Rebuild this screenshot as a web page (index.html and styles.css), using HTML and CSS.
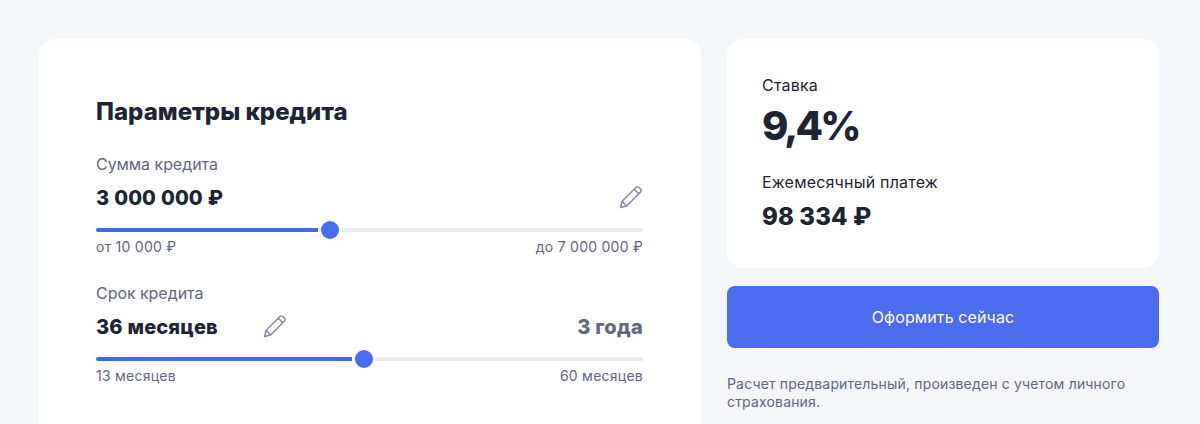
FILE: index.html
```html
<!DOCTYPE html>
<html lang="ru">
<head>
<meta charset="utf-8">
<title>Параметры кредита</title>
<link rel="stylesheet" href="styles.css">
</head>
<body>
<main class="page">
  <section class="card params">
    <h1 class="title">Параметры кредита</h1>
    <div class="field first">
      <div class="label">Сумма кредита</div>
      <div class="value-row">
        <span class="value">3 000 000 ₽</span>
        <svg class="pencil" viewBox="0 0 24 24"><path d="M1.5 22.5l1.6-6.2L16.9 2.5a2.1 2.1 0 0 1 3 0l1.6 1.6a2.1 2.1 0 0 1 0 3L7.7 20.9zM3.1 16.3l4.6 4.6M15.2 4.2l4.6 4.6M1.5 22.5l3.2-.8"/></svg>
      </div>
      <div class="slider"><div class="fill fill-sum"></div><div class="thumb"></div><div class="rest"></div></div>
      <div class="limits"><span>от 10 000 ₽</span><span>до 7 000 000 ₽</span></div>
    </div>
    <div class="field second">
      <div class="label">Срок кредита</div>
      <div class="value-row">
        <span class="value">36 месяцев</span>
        <svg class="pencil pencil-inline" viewBox="0 0 24 24"><path d="M1.5 22.5l1.6-6.2L16.9 2.5a2.1 2.1 0 0 1 3 0l1.6 1.6a2.1 2.1 0 0 1 0 3L7.7 20.9zM3.1 16.3l4.6 4.6M15.2 4.2l4.6 4.6M1.5 22.5l3.2-.8"/></svg>
        <span class="years">3 года</span>
      </div>
      <div class="slider"><div class="fill fill-term"></div><div class="thumb"></div><div class="rest"></div></div>
      <div class="limits"><span>13 месяцев</span><span>60 месяцев</span></div>
    </div>
  </section>
  <aside class="side">
    <section class="card summary">
      <div class="sum-label">Ставка</div>
      <div class="rate">9,4%</div>
      <div class="sum-label monthly">Ежемесячный платеж</div>
      <div class="payment">98 334 ₽</div>
    </section>
    <button class="cta" type="button">Оформить сейчас</button>
    <p class="note">Расчет предварительный, произведен с учетом личного страхования.</p>
  </aside>
</main>
</body>
</html>
```
FILE: styles.css
```css
* { box-sizing: border-box; }
html, body { margin: 0; height: 100%; overflow: hidden; }
body {
  background: #f5f6fa;
  font-family: "Inter", "Noto Sans", sans-serif;
  color: #1e2431;
}
.page {
  display: flex;
  gap: 26px;
  padding: 39px 41px 0 39px;
  align-items: flex-start;
}
.card { background: #fff; border-radius: 16px; }
.params {
  width: 662px;
  height: 385px;
  padding: 58px 58px 0 57px;
  border-radius: 16px 16px 0 0;
}
.title {
  margin: 0;
  font-size: 24px;
  line-height: 30px;
  font-weight: 800;
  letter-spacing: 0;
}
.field.first { margin-top: 25px; }
.field.second { margin-top: 25px; }
.label {
  font-size: 16px;
  line-height: 24px;
  color: #62667e;
  letter-spacing: -0.05px;
}
.value-row {
  display: flex;
  align-items: center;
  height: 32px;
  margin-top: 6px;
}
.value {
  font-size: 20px;
  line-height: 28px;
  font-weight: 800;
  letter-spacing: 0.1px;
  word-spacing: 0.5px;
}
.pencil {
  width: 24px;
  height: 24px;
  margin-top: -2px;
  margin-left: auto;
  fill: none;
  stroke: #84869e;
  stroke-width: 1.4;
  stroke-linejoin: round;
  stroke-linecap: round;
}
.pencil-inline { margin-left: 45px; }
.years {
  margin-left: auto;
  font-size: 20px;
  line-height: 28px;
  font-weight: 800;
  letter-spacing: 0.3px;
  color: #62667e;
}
.slider {
  display: flex;
  align-items: center;
  gap: 3px;
  height: 20px;
  margin-top: 6px;
}
.fill, .rest { height: 4px; }
.fill { background: #4268ea; border-radius: 2px 0 0 2px; }
.rest { background: #ebecf3; flex: 1; border-radius: 0 2px 2px 0; }
.fill-sum { width: 222px; }
.fill-term { width: 256px; }
.thumb {
  width: 18px;
  height: 18px;
  border-radius: 50%;
  background: #4a6cee;
}
.limits {
  display: flex;
  justify-content: space-between;
  margin-top: -2px;
  font-size: 14px;
  line-height: 18px;
  color: #62667e;
  letter-spacing: 0.25px;
}
.side { width: 432px; }
.summary {
  height: 229px;
  padding: 34px 35px 0;
}
.sum-label {
  font-size: 16px;
  line-height: 24px;
  letter-spacing: 0.2px;
}
.rate {
  font-size: 40px;
  line-height: 58px;
  font-weight: 800;
  letter-spacing: -2.9px;
}
.monthly { margin-top: 15px; }
.payment {
  margin-top: 7px;
  font-size: 24px;
  line-height: 32px;
  font-weight: 800;
  letter-spacing: 0.1px;
}
.cta {
  display: block;
  width: 100%;
  height: 62px;
  margin-top: 18px;
  border: 0;
  border-radius: 8px;
  background: #4a6cee;
  color: #fff;
  font: 400 16px/24px "Inter", "Noto Sans", sans-serif;
  letter-spacing: 0.12px;
}
.note {
  margin: 27px 0 0;
  font-size: 14px;
  line-height: 18px;
  color: #62667e;
  letter-spacing: 0.17px;
}
```
